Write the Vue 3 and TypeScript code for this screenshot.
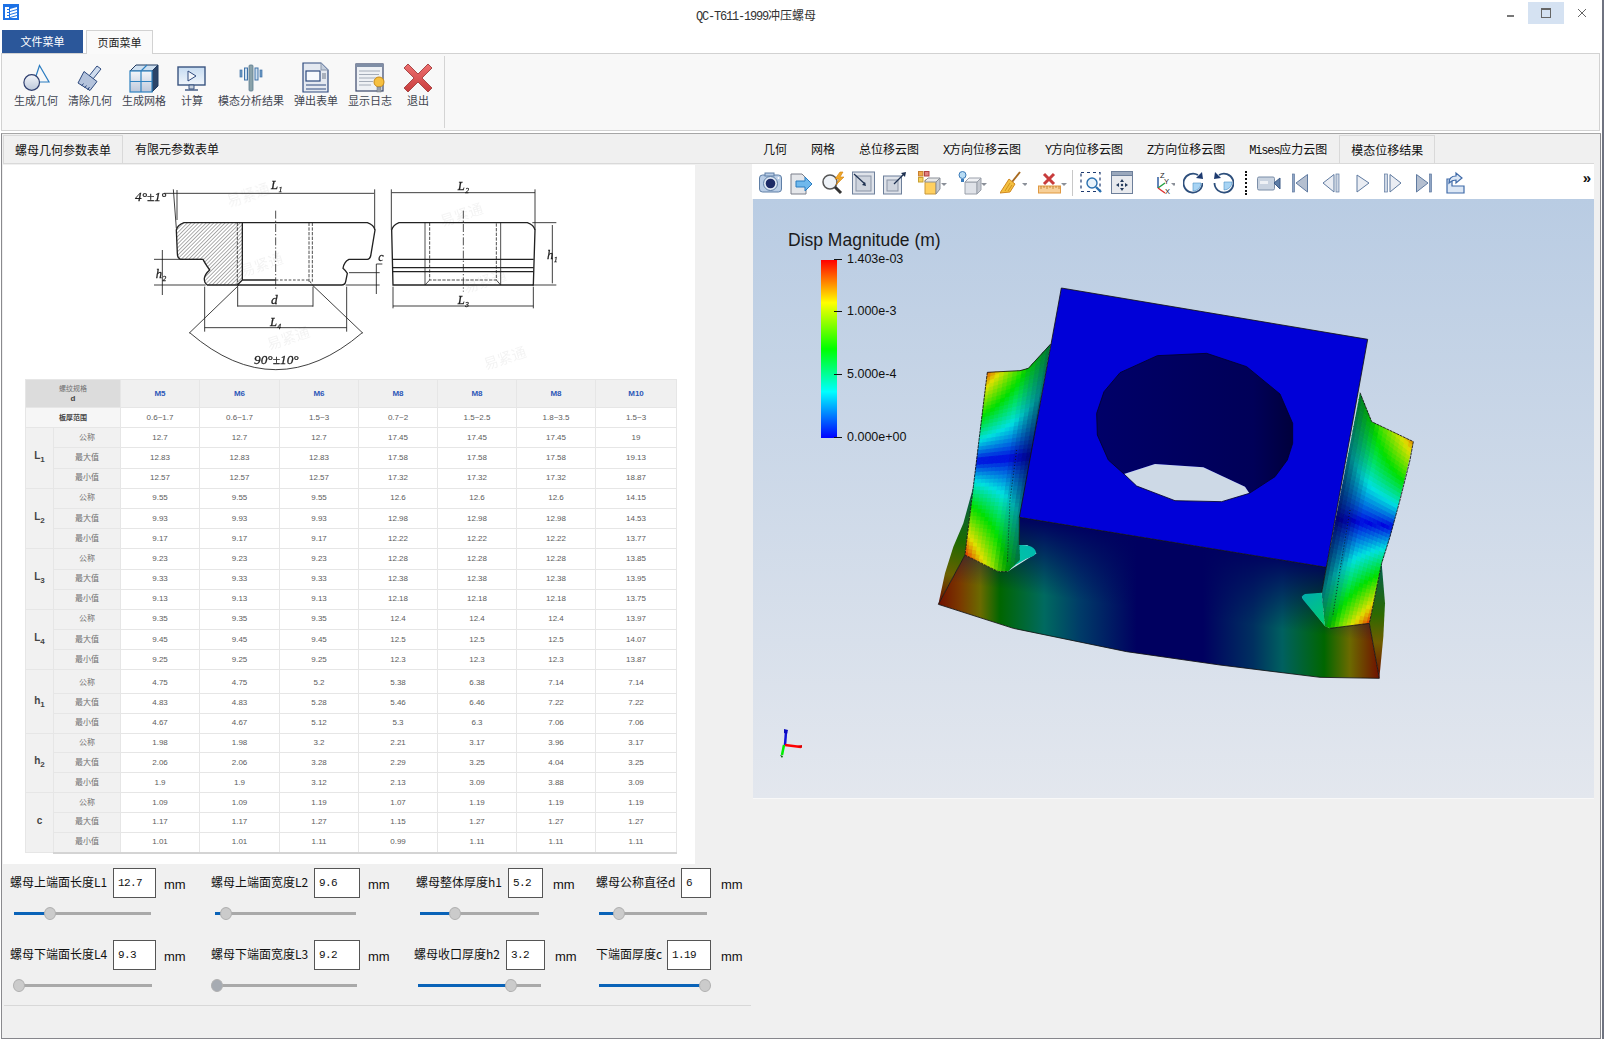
<script setup lang="ts">
interface Ctl { label: string; value: string; labelW: number; inputW: number; lm: number; sl: number; sw: number; f: number; dark?: boolean }
const ctlRows: Ctl[][] = [
  [
    { label: '螺母上端面长度L1', value: '12.7', labelW: 103, inputW: 43, lm: 0, sl: 4, sw: 137, f: 0.263 },
    { label: '螺母上端面宽度L2', value: '9.6', labelW: 103, inputW: 46, lm: 0, sl: 4, sw: 141, f: 0.078 },
    { label: '螺母整体厚度h1', value: '5.2', labelW: 92, inputW: 35, lm: 0, sl: 4, sw: 119, f: 0.294 },
    { label: '螺母公称直径d', value: '6', labelW: 85, inputW: 30, lm: 0, sl: 3, sw: 108, f: 0.185 },
  ],
  [
    { label: '螺母下端面长度L4', value: '9.3', labelW: 103, inputW: 43, lm: 0, sl: 4, sw: 138, f: 0.036 },
    { label: '螺母下端面宽度L3', value: '9.2', labelW: 103, inputW: 46, lm: 0, sl: 1, sw: 145, f: 0.034, dark: true },
    { label: '螺母收口厚度h2', value: '3.2', labelW: 92, inputW: 39, lm: -2, sl: 4, sw: 123, f: 0.756 },
    { label: '下端面厚度c', value: '1.19', labelW: 71, inputW: 44, lm: 0, sl: 3, sw: 111, f: 0.955 },
  ],
]
const heads = ['M5', 'M6', 'M6', 'M8', 'M8', 'M8', 'M10']
const range = ['0.6~1.7', '0.6~1.7', '1.5~3', '0.7~2', '1.5~2.5', '1.8~3.5', '1.5~3']
const tri = (a: string, b: string, c: string) => [a, a, a, b, b, b, c]
const groups = [
  { n: 'L', s: '1', rows: [tri('12.7', '17.45', '19'), tri('12.83', '17.58', '19.13'), tri('12.57', '17.32', '18.87')] },
  { n: 'L', s: '2', rows: [tri('9.55', '12.6', '14.15'), tri('9.93', '12.98', '14.53'), tri('9.17', '12.22', '13.77')] },
  { n: 'L', s: '3', rows: [tri('9.23', '12.28', '13.85'), tri('9.33', '12.38', '13.95'), tri('9.13', '12.18', '13.75')] },
  { n: 'L', s: '4', rows: [tri('9.35', '12.4', '13.97'), tri('9.45', '12.5', '14.07'), tri('9.25', '12.3', '13.87')] },
  { n: 'h', s: '1', rows: [['4.75', '4.75', '5.2', '5.38', '6.38', '7.14', '7.14'], ['4.83', '4.83', '5.28', '5.46', '6.46', '7.22', '7.22'], ['4.67', '4.67', '5.12', '5.3', '6.3', '7.06', '7.06']] },
  { n: 'h', s: '2', rows: [['1.98', '1.98', '3.2', '2.21', '3.17', '3.96', '3.17'], ['2.06', '2.06', '3.28', '2.29', '3.25', '4.04', '3.25'], ['1.9', '1.9', '3.12', '2.13', '3.09', '3.88', '3.09']] },
  { n: 'c', s: '', rows: [['1.09', '1.09', '1.19', '1.07', '1.19', '1.19', '1.19'], ['1.17', '1.17', '1.27', '1.15', '1.27', '1.27', '1.27'], ['1.01', '1.01', '1.11', '0.99', '1.11', '1.11', '1.11']] },
]
const rowNames = ['公称', '最大值', '最小值']

const rb: number[][] = [[0, 0, 0, 255], [0.26, 0, 255, 255], [0.5, 0, 255, 0], [0.76, 255, 255, 0], [1, 255, 0, 0]]
function rainbow(t: number, shade: number): string {
  const x = Math.min(1, Math.max(0, t))
  let i = 0
  while (i < rb.length - 2 && x > rb[i + 1][0]) i++
  const a = rb[i], b = rb[i + 1]
  const k = (x - a[0]) / (b[0] - a[0])
  const c = [1, 2, 3].map((j) => Math.round((a[j] + (b[j] - a[j]) * k) * shade))
  return `rgb(${c[0]},${c[1]},${c[2]})`
}
type P = [number, number]
function mesh(o0: P, o1: P, i0: P, i1: P, c0: number, c1: number) {
  const out: { pts: string; fill: string }[] = []
  const nu = 14, nv = 56
  const pt = (u: number, v: number): string => {
    const ox = o0[0] + (o1[0] - o0[0]) * v, oy = o0[1] + (o1[1] - o0[1]) * v
    const ix = i0[0] + (i1[0] - i0[0]) * v, iy = i0[1] + (i1[1] - i0[1]) * v
    return `${(ox + (ix - ox) * u).toFixed(1)},${(oy + (iy - oy) * u).toFixed(1)}`
  }
  for (let a = 0; a < nu; a++) {
    for (let b = 0; b < nv; b++) {
      const u0 = a / nu, u1 = (a + 1) / nu, v0 = b / nv, v1 = (b + 1) / nv
      const u = (u0 + u1) / 2, v = (v0 + v1) / 2
      const cen = c0 + (c1 - c0) * u
      const base = Math.pow(Math.abs(2 * (v - cen)), 0.85) * 1.02
      const t = base * (1 - 0.6 * u)
      const shade = (u < 0.55 ? 1 : 1 - ((u - 0.55) / 0.45) * 0.5) * 0.88
      out.push({ pts: [pt(u0, v0), pt(u1, v0), pt(u1, v1), pt(u0, v1)].join(' '), fill: rainbow(t, shade) })
    }
  }
  return out
}
const leftMesh = mesh([205, 270], [130, 880], [400, 200], [290, 920], 0.5, 0.5)
const rightMesh = mesh([1490, 470], [1340, 1100], [1320, 330], [1180, 1090], 0.48, 0.55)

const dd = (x: number) => `<path d="M${x} 12h6l-3 3z" fill="#8a8f98"/>`
const tools: { w: number; ml: number; html: string }[] = [
  { w: 23, ml: 7, html: '<rect x=".5" y="4" width="22" height="17" rx="3" fill="#b9cde6" stroke="#5f7fa6"/><rect x="6" y="2" width="9" height="3" fill="#b9cde6" stroke="#5f7fa6"/><circle cx="11.5" cy="12.5" r="7" fill="#dfe8f3" stroke="#5f7fa6"/><circle cx="11.5" cy="12.5" r="4.8" fill="#1c2a66"/><circle cx="19.5" cy="7" r="1" fill="#fff"/>' },
  { w: 23, ml: 8, html: '<path d="M1 3h11l4 4v16H1z" fill="#e4e6ea" stroke="#7a7f8a"/><path d="M6 10h9V6l7 7-7 7v-4H6z" fill="#6fb8ec" stroke="#2a7cc0"/>' },
  { w: 24, ml: 8, html: '<circle cx="9" cy="11" r="7" fill="#eef2f7" stroke="#555" stroke-width="1.5"/><path d="M14 16l6 6" stroke="#333" stroke-width="3"/><path d="M19 1l-5 7h4l-3 6 8-8h-4l3-5z" fill="#f0a828" stroke="#d08010" stroke-width=".6"/>' },
  { w: 23, ml: 7, html: '<rect x=".5" y="1" width="22" height="22" fill="#dfe3ea" stroke="#6d7f9a"/><rect x="4" y="5" width="15" height="15" fill="#ced4de" stroke="#8a94a5"/><path d="M2 3l11 10" stroke="#1d3050" stroke-width="1.2"/><path d="M14 15l-4-1 3-3z" fill="#1d3050"/>' },
  { w: 24, ml: 8, html: '<rect x=".5" y="5" width="18" height="18" fill="#dfe3ea" stroke="#6d7f9a"/><rect x="4" y="9" width="11" height="11" fill="#ced4de" stroke="#8a94a5"/><path d="M11 13L21 3" stroke="#1d3050" stroke-width="1.2"/><path d="M23 1l-1 5-4-4z" fill="#1d3050"/>' },
  { w: 29, ml: 11, html: '<rect x=".5" y=".5" width="4.5" height="4.5" fill="#f0a848" stroke="#c88030"/><rect x="6.5" y=".5" width="4.5" height="4.5" fill="#e08080" stroke="#b04040"/><rect x=".5" y="6.5" width="4.5" height="4.5" fill="#f4d060" stroke="#c8a030"/><path d="M7 9h14l-3 3v11H7z" fill="#ffd060" stroke="#c89838"/><path d="M7 10l3-3h12l-4 4H7z" fill="#e8e8e8" stroke="#8a8f98"/><path d="M18 11l4-4v11l-4 5z" fill="#c4c8d0" stroke="#8a8f98"/>' + dd(23) },
  { w: 29, ml: 11, html: '<circle cx="4.5" cy="4" r="3.5" fill="#b8dcf4" stroke="#3a7ab8"/><path d="M3 8h3v3H3z" fill="#3a7ab8"/><path d="M7 11h12v12H7z" fill="#dfe2e8" stroke="#9aa0aa"/><path d="M7 11l4-4h12l-4 4z" fill="#f0f1f4" stroke="#9aa0aa"/><path d="M19 11l4-4v12l-4 4z" fill="#c4c8d0" stroke="#9aa0aa"/>' + dd(23) },
  { w: 27, ml: 13, html: '<path d="M20 1l-8 10" stroke="#a86a20" stroke-width="2"/><path d="M9 8l6 5-5 8-10 1z" fill="#f4c040" stroke="#d08820"/><path d="M5 20l5-8M8 20l4-6" stroke="#c08010" stroke-width=".7"/>' + dd(22) },
  { w: 29, ml: 11, html: '<rect x=".5" y="15" width="22" height="7" fill="#f6cf98" stroke="#e09840"/><path d="M3 15v3M6 15v2M9 15v3M12 15v2M15 15v3M18 15v2M21 15v3" stroke="#c07820" stroke-width=".8"/><path d="M6 3l10 10M16 3L6 13" stroke="#c83c3c" stroke-width="3"/>' + dd(23) },
  { w: 22, ml: 13, html: '<rect x="1" y="1.5" width="19" height="19" fill="none" stroke="#1d3a70" stroke-width="1.2" stroke-dasharray="3 3"/><circle cx="12" cy="12" r="5" fill="#e8f2fa" stroke="#2a70b0" stroke-width="1.4"/><path d="M16 16l5 5" stroke="#2a70b0" stroke-width="2.4"/>' },
  { w: 22, ml: 9, html: '<rect x=".5" y=".5" width="21" height="22" fill="#e8eaee" stroke="#6d7f9a"/><rect x=".5" y=".5" width="21" height="4" fill="#9aa8bc" stroke="#6d7f9a"/><path d="M11 8l-2 3h4zM11 20l-2-3h4zM5 14l3-2v4zM17 14l-3-2v4z" fill="#233a5c"/><circle cx="11" cy="14" r="1.2" fill="#233a5c"/>' },
  { w: 25, ml: 17, html: '<path d="M8 17V6" stroke="#1e4f9a" stroke-width="1.4"/><path d="M8 17l7-5" stroke="#20a040" stroke-width="1.4"/><path d="M8 17l7 5" stroke="#e03030" stroke-width="1.4"/><text x="10" y="7" font-size="7.5" font-family="Liberation Sans" fill="#222">Z</text><text x="14" y="13" font-size="7.5" font-family="Liberation Sans" fill="#222">Y</text><text x="15" y="23" font-size="7.5" font-family="Liberation Sans" fill="#222">X</text>' + dd(21) },
  { w: 20, ml: 8, html: '<path d="M15 4A9.5 9.5 0 1 0 19.5 12" fill="none" stroke="#2d4f7c" stroke-width="1.8"/><path d="M19 1l1 7-7-1z" fill="#1d3a70"/><path d="M10 12h8a8 8 0 0 1-8 8z" fill="#a8d4f4" stroke="#4a90c8" stroke-width=".6"/>' },
  { w: 21, ml: 10, html: '<path d="M6 4a9.5 9.5 0 1 1-4.5 8" fill="none" stroke="#2d4f7c" stroke-width="1.8"/><path d="M2 1l-1 7 7-1z" fill="#1d3a70"/><path d="M11 11h8a8 8 0 0 1-8 8z" fill="#a8d4f4" stroke="#4a90c8" stroke-width=".6"/>' },
  { w: 24, ml: 23, html: '<rect x=".5" y="6" width="17" height="13" rx="1.5" fill="#c9d3e0" stroke="#7b8ea8"/><rect x="3" y="10" width="8" height="3" fill="#eef1f5"/><path d="M17 12l6-5v11z" fill="#5e7da6" stroke="#3c5a86"/>' },
  { w: 16, ml: 11, html: '<rect x=".5" y="3" width="2" height="18" fill="#8ea4c4" stroke="#5f7aa0" stroke-width=".7"/><path d="M15.5 3.5L4 12l11.5 9z" fill="#b4bfd0" stroke="#5f7aa0"/>' },
  { w: 18, ml: 14, html: '<path d="M12 3.5L1 12l11 9z" fill="#eaedf3" stroke="#5f7aa0"/><rect x="14" y="3" width="3" height="18" fill="#ced7e4" stroke="#5f7aa0" stroke-width=".7"/>' },
  { w: 14, ml: 16, html: '<path d="M1 4l12 8-12 9z" fill="#eaedf3" stroke="#5f7aa0"/>' },
  { w: 18, ml: 14, html: '<rect x=".5" y="3" width="3" height="18" fill="#ced7e4" stroke="#5f7aa0" stroke-width=".7"/><path d="M6 3.5L17 12 6 21z" fill="#eaedf3" stroke="#5f7aa0"/>' },
  { w: 16, ml: 14, html: '<path d="M.5 3.5L12 12 .5 21z" fill="#b4bfd0" stroke="#5f7aa0"/><rect x="13.5" y="3" width="2" height="18" fill="#8ea4c4" stroke="#5f7aa0" stroke-width=".7"/>' },
  { w: 19, ml: 14, html: '<path d="M1 8v14h17v-7H6V8z" fill="#dce7f5" stroke="#3f6aa8" stroke-width="1.2"/><path d="M3 12c0-5 3-7 7-7V2l6 5-6 5V9c-3 0-5 1-7 3z" fill="#dce7f5" stroke="#3f6aa8" stroke-width="1.2"/>' },
]
</script>

<template>
  <div class="win">
    <svg class="defs" width="0" height="0" aria-hidden="true">
      <defs>
        <linearGradient id="gSoft" x1="0" y1="0" x2="0" y2="1"><stop offset="0" stop-color="#f4f6fa" /><stop offset="1" stop-color="#bcc7da" /></linearGradient>
        <linearGradient id="gMon" x1="0" y1="0" x2="0" y2="1"><stop offset="0" stop-color="#c6dcf2" /><stop offset="1" stop-color="#f0f5fb" /></linearGradient>
        <linearGradient id="gRed" x1="0" y1="0" x2="0" y2="1"><stop offset="0" stop-color="#ee7070" /><stop offset="1" stop-color="#c83c3c" /></linearGradient>
      </defs>
    </svg>

    <header class="title">
      <svg class="appicon" width="16" height="16" viewBox="0 0 16 16">
        <rect width="16" height="16" fill="#1d72e6" />
        <path d="M2 3h4v2H4v1h2v2H4v1h2v2H4v1h2v2H2zM7 5l7-2v2L7 7zM7 8l7-2v2l-7 2zM7 11l7-2v2l-7 2zM7 14l7-2v2H7z" fill="#fff" />
      </svg>
      <div class="caption"><span class="m">QC-T611-1999</span>冲压螺母</div>
      <div class="winbtns">
        <div class="wb"><span class="minbar"></span></div>
        <div class="wb hov"><span class="maxbox"></span></div>
        <div class="wb">
          <svg width="10" height="10" viewBox="0 0 10 10"><path d="M1 1l8 8M9 1L1 9" stroke="#666" stroke-width="1" /></svg>
        </div>
      </div>
    </header>

    <nav class="menutabs">
      <div class="mt active">文件菜单</div>
      <div class="mt page">页面菜单</div>
    </nav>

    <section class="ribbon">
      <div class="rib-item">
        <svg width="40" height="34" viewBox="0 0 40 34"><path d="M23.5 6.500L33 23H18z" fill="none" stroke="#2b7cc0" stroke-width="1.2" /><circle cx="15.700" cy="23.500" r="7.800" fill="url(#gSoft)" stroke="#2e3e6e" stroke-width="1.200" /></svg>
        <span>生成几何</span>
      </div>
      <div class="rib-item">
        <svg width="40" height="34" viewBox="0 0 40 34"><path d="M27 7l4 3-8 10-4-3z" fill="#cfdcee" stroke="#2e4a7e" /><path d="M14 12.500l13 10-7 9L8 24z" fill="#b4c3dc" stroke="#2e4a7e" /><path d="M11.500 27l2-2.500M14.500 29l2-2.500M17.500 31l2-3" stroke="#2e4a7e" /></svg>
        <span>清除几何</span>
      </div>
      <div class="rib-item">
        <svg width="40" height="34" viewBox="0 0 40 34"><path d="M6 12l6-6h22l-6 6z" fill="#cfe0f0" stroke="#1f3a60" /><path d="M28 12l6-6v21l-6 6z" fill="#2b4468" stroke="#1f3a60" /><rect x="6" y="12" width="22" height="21" fill="url(#gSoft)" stroke="#2f82c0" stroke-width="1.200" /><path d="M17 12v21M6 22.500h22M17 12l6-6" stroke="#2f82c0" stroke-width="1.200" fill="none" /></svg>
        <span>生成网格</span>
      </div>
      <div class="rib-item sm">
        <svg width="30" height="34" viewBox="0 0 30 34"><rect x="1" y="8" width="27" height="18" fill="url(#gMon)" stroke="#3a5480" stroke-width="1.400" /><path d="M11 12l8 5-8 5z" fill="#f4f7fb" stroke="#2e4a7e" /><path d="M12 26h5v4h-5z" fill="#c6d0de" stroke="#3a5480" /><path d="M8 31h13" stroke="#3a5480" stroke-width="1.400" /></svg>
        <span>计算</span>
      </div>
      <div class="rib-item">
        <svg width="40" height="34" viewBox="0 0 40 34"><rect x="18" y="6" width="4" height="26" rx="1" fill="#8aa2aa" stroke="#5c7c90" stroke-width=".8" /><rect x="13.500" y="9" width="3" height="12" fill="#cfe0f0" stroke="#3f72a8" /><rect x="24" y="9" width="3" height="12" fill="#cfe0f0" stroke="#3f72a8" /><rect x="9" y="11" width="2" height="7" fill="#6d9ac4" stroke="#3f72a8" stroke-width=".7" /><rect x="29" y="11" width="2" height="7" fill="#6d9ac4" stroke="#3f72a8" stroke-width=".7" /></svg>
        <span>模态分析结果</span>
      </div>
      <div class="rib-item">
        <svg width="40" height="34" viewBox="0 0 40 34"><path d="M7 4h18l7 7v22H7z" fill="#e4e9f1" stroke="#2e4a7e" stroke-width="1.200" /><path d="M25 4v7h7" fill="#c4cedc" stroke="#8a97ab" /><rect x="10" y="12" width="14" height="10" fill="#f6f9fd" stroke="#2e4a7e" stroke-width="1.200" /><rect x="26" y="14" width="4" height="6" fill="#a8b0bc" /><path d="M10 26h20M10 30h20" stroke="#2e4a7e" /></svg>
        <span>弹出表单</span>
      </div>
      <div class="rib-item">
        <svg width="40" height="34" viewBox="0 0 40 34"><rect x="6" y="5" width="27" height="27" fill="#eef1f5" stroke="#39466a" stroke-width="1.200" /><rect x="6" y="5" width="27" height="3" fill="#7f8ea6" /><path d="M9 12h21M9 15.500h20M9 19h18M9 22.500h14M9 26h12" stroke="#a4acb8" /><circle cx="29" cy="23" r="5" fill="#f6c040" stroke="#c88a18" /><rect x="27" y="28" width="4" height="5" fill="#9aa0aa" stroke="#6a707a" stroke-width=".5" /></svg>
        <span>显示日志</span>
      </div>
      <div class="rib-item sm">
        <svg width="30" height="34" viewBox="0 0 30 34"><path d="M5 6l10 10L25 6l4 4-10 10 10 10-4 4-10-10L5 34l-4-4 10-10L1 10z" transform="translate(0 -1)" fill="url(#gRed)" stroke="#a84848" /></svg>
        <span>退出</span>
      </div>
      <div class="rib-sep"></div>
    </section>

    <main class="frame">
      <section class="leftpane">
        <div class="tabs">
          <div class="tab on">螺母几何参数表单</div>
          <div class="tab">有限元参数表单</div>
        </div>
        <div class="sheet">
          <svg class="drawing" width="460" height="210" viewBox="0 0 1380 630">
            <defs>
              <pattern id="hatch" width="8" height="8" patternUnits="userSpaceOnUse" patternTransform="rotate(-45)"><path d="M0 0h8" stroke="#444" stroke-width="2.600" /></pattern>
            </defs>
            <g font-family="Noto Sans CJK SC, sans-serif" font-size="44" fill="#000" opacity=".05">
              <text x="330" y="110" transform="rotate(-18 330 110)">易紧通</text>
              <text x="970" y="170" transform="rotate(-18 970 170)">易紧通</text>
              <text x="370" y="320" transform="rotate(-18 370 320)">易紧通</text>
              <text x="1040" y="370" transform="rotate(-18 1040 370)">易紧通</text>
              <text x="450" y="540" transform="rotate(-18 450 540)">易紧通</text>
              <text x="1100" y="600" transform="rotate(-18 1100 600)">易紧通</text>
            </g>
            <g fill="none" stroke="#222" stroke-width="4">
              <path d="M172 180Q175 165 195 158H370V330L355 345H265Q255 338 256 325Q258 312 272 300Q258 280 252 268H185Q175 265 175 250Z" fill="url(#hatch)" />
              <path d="M370 158H745Q765 165 768 180L755 258Q752 268 745 268H690Q675 275 672 295Q680 302 685 310L680 335Q678 345 668 345H355" />
              <path d="M370 330H470" stroke-width="4.500" />
              <path d="M470 330H570L580 345" stroke-dasharray="8 5" stroke-width="2.400" />
              <path d="M580 158V335M570 158V335" stroke-width="2.400" stroke-dasharray="10 4" />
              <path d="M355 158V345" stroke-width="2.400" stroke-dasharray="10 4" />
              <path d="M470 122V360" stroke-width="2.400" stroke-dasharray="24 6 4 6" />
              <path d="M818 180Q822 165 840 158H1225Q1245 165 1248 180L1243 345H822Z" />
              <path d="M820 268H1244M820 293H1244M820 305H1244" />
              <path d="M918 158V345M1145 158V345" stroke-width="2.400" />
              <path d="M932 158V330H1132V158" stroke-width="2.400" stroke-dasharray="10 4" />
              <path d="M918 345L932 330M1145 345L1132 330" stroke-width="2.400" />
              <path d="M1033 122V365" stroke-width="2.400" stroke-dasharray="24 6 4 6" />
              <g stroke-width="2.600">
                <path d="M163 58L172 175M174 60V150M135 70H765M767 58V180" />
                <path d="M817 58V180M1248 58V180M818 68H1248M1300 165V340M1240 158H1312M1240 345H1312" />
                <path d="M822 350V415M1243 350V415M822 408H1243" />
                <path d="M356 350V410M582 350V410M356 408H582" />
                <path d="M257 350V485M683 350V485M257 473H683" />
                <path d="M130 240V270M130 345V375M105 268H250M105 345H260M130 268V345" />
                <path d="M790 282H772V372M690 308H782M680 345H782" />
                <path d="M360 345L210 490M580 345L732 490M212 488Q470 710 730 488" />
              </g>
            </g>
            <g font-family="Liberation Serif, serif" font-style="italic" fill="#222" stroke="#222" stroke-width=".8">
              <text x="48" y="92" font-size="40">4°±1°</text>
              <text x="456" y="58" font-size="38">L₁</text>
              <text x="1016" y="60" font-size="38">L₂</text>
              <text x="1284" y="267" font-size="38">h₁</text>
              <text x="110" y="324" font-size="38">h₂</text>
              <text x="778" y="272" font-size="36">c</text>
              <text x="456" y="402" font-size="40">d</text>
              <text x="453" y="467" font-size="38">L₄</text>
              <text x="1016" y="402" font-size="38">L₃</text>
              <text x="405" y="582" font-size="40">90°±10°</text>
            </g>
          </svg>
          <table class="spec">
            <colgroup>
              <col class="c1" /><col class="c2" /><col class="c3" /><col class="c4" /><col class="c3" /><col class="c3" /><col class="c3" /><col class="c3" /><col class="c5" />
            </colgroup>
            <tbody>
              <tr class="hd">
                <th colspan="2" class="corner"><div>螺纹规格</div><b>d</b></th>
                <th v-for="(h, i) in heads" :key="i" class="blue">{{ h }}</th>
              </tr>
              <tr>
                <th colspan="2" class="plate">板厚范围</th>
                <td v-for="(r, i) in range" :key="i">{{ r }}</td>
              </tr>
              <template v-for="(g, gi) in groups" :key="gi">
                <tr v-for="(row, ri) in g.rows" :key="ri" :class="{ lower: gi >= 4, gapped: gi === 4 && ri === 0 }">
                  <th v-if="ri === 0" rowspan="3" class="sym">{{ g.n }}<sub>{{ g.s }}</sub></th>
                  <th class="rn">{{ rowNames[ri] }}</th>
                  <td v-for="(v, vi) in row" :key="vi">{{ v }}</td>
                </tr>
              </template>
            </tbody>
          </table>
        </div>
        <div class="controls">
          <div v-for="(row, ri) in ctlRows" :key="ri" class="ctl-row">
            <div v-for="(c, ci) in row" :key="ci" class="cell" :class="'col' + ci">
              <div class="fields" :style="{ marginLeft: c.lm + 'px' }">
                <label class="lab" :style="{ width: c.labelW + 'px' }">{{ c.label }}</label>
                <input class="inp" :style="{ width: c.inputW + 'px' }" :value="c.value" readonly />
                <span class="mm">mm</span>
              </div>
              <div class="slider" :style="{ marginLeft: c.lm + c.sl + 'px', width: c.sw + 'px' }">
                <div class="fill" :style="{ width: c.f * 100 + '%' }"></div>
                <div class="thumb" :class="{ dark: c.dark }" :style="{ left: c.f * 100 + '%' }"></div>
              </div>
            </div>
          </div>
        </div>
      </section>

      <section class="rightpane">
        <div class="tabs rtabs">
          <div class="tab">几何</div>
          <div class="tab">网格</div>
          <div class="tab">总位移云图</div>
          <div class="tab"><span class="m">X</span>方向位移云图</div>
          <div class="tab"><span class="m">Y</span>方向位移云图</div>
          <div class="tab"><span class="m">Z</span>方向位移云图</div>
          <div class="tab"><span class="m">Mises</span>应力云图</div>
          <div class="tab on">模态位移结果</div>
        </div>
        <div class="viewbox">
          <div class="toolbar">
            <template v-for="(t, i) in tools" :key="i">
              <i v-if="i === 9" class="solid"></i>
              <i v-if="i === 14" class="dotted"></i>
              <svg class="tool" :width="t.w" height="24" :viewBox="`0 0 ${t.w} 24`" :style="{ marginLeft: (i === 9 ? 7 : i === 14 ? 10 : t.ml) + 'px' }" v-html="t.html"></svg>
            </template>
            <span class="more">»</span>
          </div>
          <div class="canvas">
            <div class="legend">
              <div class="ltitle">Disp Magnitude (m)</div>
              <div class="lbar"></div>
              <div class="tick t1"><i></i>1.403e-03</div>
              <div class="tick t2"><i></i>1.000e-3</div>
              <div class="tick t3"><i></i>5.000e-4</div>
              <div class="tick t4"><i></i>0.000e+00</div>
            </div>
            <svg class="triad" width="60" height="50" viewBox="0 0 60 50">
              <path d="M15 25L16 12" stroke="#1212d8" stroke-width="2.500" />
              <path d="M14 9l4 1-1 4-3-1z" fill="#0a0ac0" />
              <path d="M15 25L31 27" stroke="#f00" stroke-width="2.500" />
              <path d="M27 26l5-1v3z" fill="#d00" />
              <path d="M14 25L12 35" stroke="#0e0" stroke-width="2.500" />
              <path d="M10 35l3 1-1 2z" fill="#060" />
            </svg>
            <svg class="model" width="520" height="420" viewBox="0 0 1560 1260">
              <defs>
                <linearGradient id="front" gradientUnits="userSpaceOnUse" x1="55" y1="0" x2="1378" y2="0">
                  <stop offset="0" stop-color="#701000" /><stop offset=".05" stop-color="#7a3a00" /><stop offset=".095" stop-color="#6b6a00" /><stop offset=".14" stop-color="#006600" /><stop offset=".24" stop-color="#006a60" /><stop offset=".32" stop-color="#003c68" /><stop offset=".45" stop-color="#000060" /><stop offset=".6" stop-color="#000060" /><stop offset=".714" stop-color="#003060" /><stop offset=".78" stop-color="#006060" /><stop offset=".875" stop-color="#006600" /><stop offset=".933" stop-color="#6b6a00" /><stop offset="1" stop-color="#701000" />
                </linearGradient>
                <linearGradient id="frontShade" gradientUnits="userSpaceOnUse" x1="640" y1="800" x2="610" y2="1010">
                  <stop offset="0" stop-color="#000060" stop-opacity=".95" /><stop offset="1" stop-color="#000060" stop-opacity="0" />
                </linearGradient>
                <linearGradient id="holeG" x1="0" y1="0" x2="1" y2="0">
                  <stop offset="0" stop-color="#000068" /><stop offset=".8" stop-color="#000058" /><stop offset="1" stop-color="#00003c" />
                </linearGradient>
                <linearGradient id="flL" gradientUnits="userSpaceOnUse" x1="160" y1="660" x2="70" y2="1000">
                  <stop offset="0" stop-color="#00604c" /><stop offset=".45" stop-color="#1c6a00" /><stop offset=".75" stop-color="#6a6000" /><stop offset="1" stop-color="#701000" />
                </linearGradient>
                <linearGradient id="flR" gradientUnits="userSpaceOnUse" x1="1390" y1="880" x2="1375" y2="1220">
                  <stop offset="0" stop-color="#006050" /><stop offset=".45" stop-color="#2c6a00" /><stop offset=".7" stop-color="#705c00" /><stop offset="1" stop-color="#701000" />
                </linearGradient>
                <linearGradient id="tealL" gradientUnits="userSpaceOnUse" x1="270" y1="900" x2="350" y2="830">
                  <stop offset="0" stop-color="#00c8a0" /><stop offset="1" stop-color="#00b8b0" />
                </linearGradient>
                <linearGradient id="tealR" gradientUnits="userSpaceOnUse" x1="1150" y1="980" x2="1215" y2="1068">
                  <stop offset="0" stop-color="#00b0a8" /><stop offset="1" stop-color="#00d070" />
                </linearGradient>
                <clipPath id="clipL"><polygon points="202,307 300,302 325,295 392,222 300,742 298,825 300,870 262,905 235,905 135,855 160,650 188,420" /></clipPath>
                <clipPath id="clipR"><polygon points="1320,368 1355,455 1480,515 1470,570 1440,690 1410,800 1385,880 1348,1060 1230,1075 1215,1068 1205,968 1219,892" /></clipPath>
              </defs>
              <polygon points="55,1003 135,855 235,905 262,905 350,850 322,825 298,825 298,742 1219,892 1205,968 1145,980 1215,1068 1230,1075 1348,1060 1378,1225 1200,1222 900,1185 620,1145 280,1075" fill="url(#front)" />
              <polygon points="55,1003 135,855 235,905 262,905 350,850 322,825 298,825 298,742 1219,892 1205,968 1145,980 1215,1068 1230,1075 1348,1060 1378,1225 1200,1222 900,1185 620,1145 280,1075" fill="url(#frontShade)" />
              <polygon points="160,650 130,760 100,830 75,910 55,1003 135,855" fill="url(#flL)" />
              <polygon points="1385,880 1395,1000 1390,1100 1378,1225 1348,1060" fill="url(#flR)" />
              <path d="M262 905Q300 870 340 858Q356 848 340 834Q330 824 298 825Z" fill="url(#tealL)" />
              <path d="M1205 968L1155 972Q1140 978 1150 990L1215 1068Z" fill="url(#tealR)" />
              <g clip-path="url(#clipL)"><polygon v-for="(c, i) in leftMesh" :key="i" :points="c.pts" :fill="c.fill" :stroke="c.fill" stroke-width="3" /></g>
              <g clip-path="url(#clipR)"><polygon v-for="(c, i) in rightMesh" :key="i" :points="c.pts" :fill="c.fill" :stroke="c.fill" stroke-width="3" /></g>
              <polygon points="424,54 1343,208 1219,892 298,742" fill="#0000d8" />
              <polygon points="712,257 860,250 980,290 1080,372 1118,460 1118,520 1102,570 1065,620 988,670 975,650 850,592 705,582 612,612 565,570 532,495 530,430 552,365 600,308" fill="url(#holeG)" />
              <polygon points="612,612 705,582 850,592 975,650 988,670 905,695 765,692 650,648" fill="#cdd9e6" />
              <g fill="none" stroke="#111" stroke-width="2.500">
                <path d="M424 54L1343 208L1219 892L298 742Z" />
                <path d="M712 257L860 250L980 290L1080 372L1118 460L1118 520L1102 570L1065 620L988 670L905 695L765 692L650 648L612 612L565 570L532 495L530 430L552 365L600 308Z" stroke="#00002a" />
                <path d="M202 307L300 302L325 295L392 222" />
                <path d="M202 307L188 420L160 650L135 855L235 905L262 905" stroke-dasharray="9 2" />
                <path d="M135 855L55 1003L280 1075L620 1145L900 1185L1200 1222L1378 1225L1348 1060L1230 1075" />
                <path d="M1480 515L1470 570L1440 690L1410 800L1385 880L1348 1060" stroke-dasharray="9 2" />
                <path d="M1320 368L1355 455L1480 515" stroke-dasharray="9 2" />
                <path d="M290 540L270 690L262 880M1290 720L1260 900L1238 1040" stroke-dasharray="3 6" />
                <path d="M298 742V825M1219 892L1205 968" />
              </g>
            </svg>
          </div>
        </div>
      </section>
    </main>
  </div>
</template>

<style>
html, body { margin: 0; padding: 0; background: #fff; }
</style>

<style scoped>
.win {
  width: 1604px; height: 1039px; box-sizing: border-box; background: #fff;
  display: flex; flex-direction: column; position: relative; overflow: hidden;
  border-right: 2px solid #6f7380;
  font-family: "Noto Sans CJK SC", "Liberation Sans", sans-serif; color: #222; font-size: 12px;
}
.defs { position: absolute; }
.m { font-family: "Liberation Mono", monospace; letter-spacing: -1.2px; }

.title { height: 30px; position: relative; flex: none; }
.appicon { position: absolute; left: 3px; top: 4px; }
.caption { text-align: center; line-height: 30px; margin-left: -90px; font-size: 12px; color: #333; }
.winbtns { position: absolute; right: 2px; top: 2px; display: flex; }
.wb { width: 36px; height: 22px; display: flex; align-items: center; justify-content: center; }
.hov { background: #d5e2f2; }
.minbar { width: 7px; height: 2px; background: #777; margin-top: 6px; }
.maxbox { width: 8px; height: 7px; border: 1px solid #666; border-top-width: 2px; }

.menutabs { display: flex; height: 23px; padding-left: 2px; flex: none; font-size: 11px; }
.mt { text-align: center; line-height: 22px; }
.mt.active { width: 81px; background: #2b579a; color: #fff; }
.mt.page { width: 65px; margin-left: 3px; background: #fafafa; border: 1px solid #d2d2d2; border-bottom: none; position: relative; z-index: 1; color: #222; box-sizing: content-box; height: 23px; }

.ribbon {
  margin: 0 2px 0 1px; height: 76px; flex: none; box-sizing: content-box;
  background: #f8f8f8; border: 1px solid #d2d2d2; display: flex; padding-left: 7px;
}
.rib-item { display: flex; flex-direction: column; align-items: center; padding: 0 5px; margin-top: 5px; font-size: 11px; color: #3f4550; line-height: 14px; }
.rib-item.sm { padding: 0 10px; }
.rib-item svg { display: block; overflow: visible; flex: none; }
.rib-item.sm svg { margin: 0 -4px; }
.rib-sep { width: 1px; background: #d4d4d4; margin: 2px 0 2px 5px; }

.frame {
  flex: 1; margin: 2px 1px 0 1px; display: flex; background: #f0f0f0; min-height: 0;
  border: 1px solid #8a8a8e; border-top-color: #a6a6a6; border-bottom-color: #86868c;
}
.leftpane { width: 749px; flex: none; display: flex; flex-direction: column; }
.rightpane { flex: 1; min-width: 0; display: flex; flex-direction: column; }

.tabs { display: flex; height: 28px; margin-top: 1px; border-bottom: 1px solid #d9d9d9; flex: none; margin-left: 1px; font-size: 12px; }
.tab { padding: 0 12px; line-height: 28px; color: #111; white-space: nowrap; }
.tab.on { border: 1px solid #d9d9d9; border-bottom: none; padding: 0 11px; }
.rtabs { margin-left: 0; margin-right: 6px; }

.sheet { margin: 1px 56px 0 1px; background: #fff; height: 699px; flex: none; filter: blur(.25px); }
.drawing { display: block; margin: 5px 0 0 116px; height: 210px; }
.spec { border-collapse: collapse; table-layout: fixed; width: 651px; margin: -1px 0 0 22px; font-family: "Liberation Sans", "Noto Sans CJK SC", sans-serif; font-size: 8px; color: #5c5c5c; }
.c1 { width: 28px; } .c2 { width: 67px; } .c3 { width: 79px; } .c4 { width: 80px; } .c5 { width: 81px; }
.spec th, .spec td { border: 1px solid #e6e6e6; padding: 0; text-align: center; font-weight: normal; height: 19.2px; line-height: 10px; }
.spec th { background: #f1f1f1; color: #707070; }
.spec .hd th { height: 27px; background: #f0f0f0; }
.spec .hd .corner { background: #dcdcdc; font-size: 7px; }
.spec .corner b { color: #444; font-size: 8px; }
.spec .blue { color: #2d58b8; font-weight: bold; }
.spec .plate { background: #f6f6f6; font-weight: bold; font-size: 7px; color: #444; }
.spec .sym { font-weight: bold; font-size: 10px; color: #444; }
.spec .sym sub { font-size: 8px; }
.spec .lower td, .spec .lower th { height: 18.85px; }
.spec .gapped td, .spec .gapped th { height: 20.5px; padding-top: 2px; }
.spec tr:last-child td, .spec tr:last-child th { border-bottom: 2px solid #d4d4d4; }

.controls { padding-top: 4px; display: flex; flex-direction: column; gap: 22px; height: 142px; box-sizing: border-box; border-bottom: 1px solid #d8d8d8; margin-left: 2px; flex: none; }
.ctl-row { display: flex; padding-left: 6px; }
.cell.col0 { width: 201px; } .cell.col1 { width: 205px; } .cell.col2 { width: 180px; } .cell.col3 { width: 150px; }
.fields { display: flex; align-items: center; height: 30px; white-space: nowrap; }
.lab { font-size: 12px; color: #111; flex: none; padding-bottom: 3px; }
.inp { box-sizing: border-box; height: 30px; border: 1px solid #555; background: #fff; padding: 0 0 0 4px; font-family: "Liberation Mono", monospace; font-size: 11px; letter-spacing: -.6px; color: #111; outline: none; flex: none; }
.mm { margin-left: 8px; font-family: "Liberation Sans", sans-serif; font-size: 13px; color: #111; margin-top: 3px; }
.col2 .mm, .col3 .mm { margin-left: 10px; }
.slider { position: relative; height: 3px; margin-top: 14px; background: #a9a9a9; margin-bottom: 3px; }
.fill { height: 3px; background: #0a63b8; }
.thumb { position: absolute; top: -5px; width: 12px; height: 13px; box-sizing: border-box; margin-left: -6px; border-radius: 50%; background: #cbcbcb; border: 1px solid #b0b0b0; }
.thumb.dark { background: #a6abb2; }

.viewbox { flex: 1; min-height: 0; margin-right: 6px; display: flex; flex-direction: column; }
.toolbar { height: 33px; padding-top: 2px; background: #fff; display: flex; align-items: center; flex: none; position: relative; margin-left: 1px; }
.tool { flex: none; display: block; }
.solid { width: 1px; height: 26px; background: #c8c8c8; margin-left: 5px; flex: none; }
.dotted { width: 0; height: 24px; border-left: 2px dotted #111; margin-left: 11px; flex: none; }
.more { position: absolute; right: 3px; top: 5px; font-size: 15px; font-family: "Liberation Sans", sans-serif; font-weight: bold; color: #111; }
.canvas {
  height: 599px; flex: none; position: relative; overflow: hidden; margin-left: 2px;
  background: linear-gradient(#b9cce3 0%, #e3e7ee 100%);
  border-bottom: 1px solid #f8f8f8;
  font-family: "Liberation Sans", sans-serif; color: #111;
}
.legend { position: absolute; left: 0; top: 0; }
.ltitle { position: absolute; left: 35px; top: 31px; font-size: 17.5px; line-height: 20px; white-space: nowrap; color: #1a1a1a; }
.lbar { position: absolute; left: 68px; top: 61px; width: 16px; height: 178px; background: linear-gradient(#ff0000 0%, #ffff00 24%, #00ff00 50%, #00ffff 74%, #0000ff 100%); }
.tick { position: absolute; left: 81px; font-size: 12.5px; line-height: 14px; white-space: nowrap; display: flex; align-items: center; }
.tick i { display: block; width: 8px; height: 1px; background: #111; margin-right: 5px; }
.t1 { top: 53px; } .t2 { top: 105px; } .t3 { top: 168px; } .t4 { top: 231px; }
.triad { position: absolute; left: 17px; top: 521px; }
.model { position: absolute; left: 167px; top: 71px; }
</style>
